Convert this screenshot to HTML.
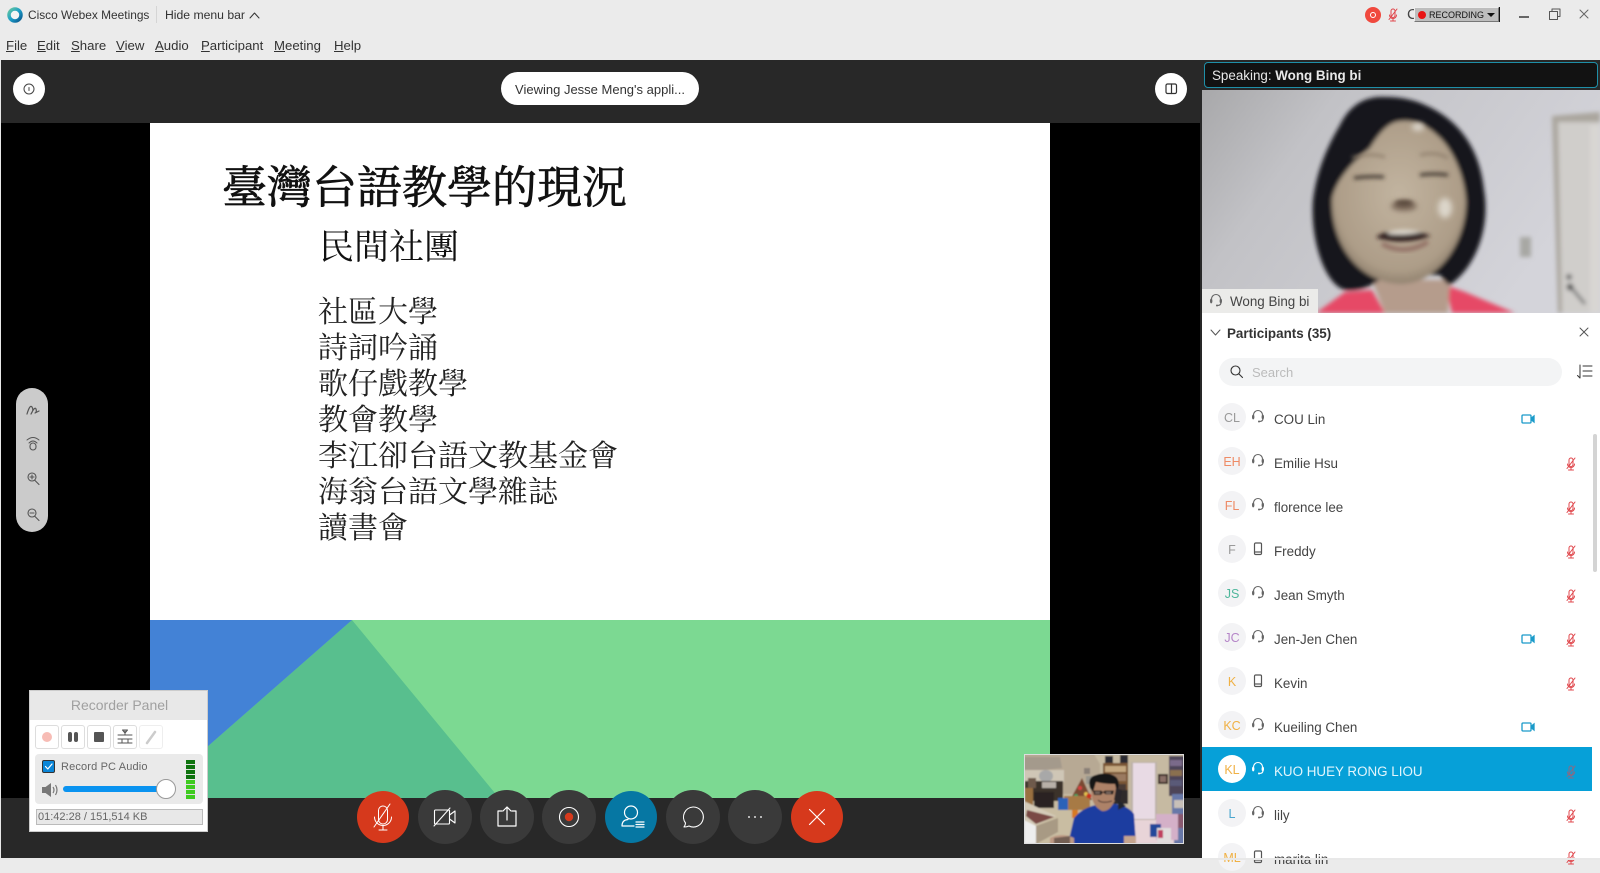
<!DOCTYPE html>
<html lang="zh-Hant"><head><meta charset="utf-8"><title>Cisco Webex Meetings</title>
<style>
*{box-sizing:border-box}
html,body{margin:0;padding:0;width:1600px;height:860px;overflow:hidden;background:#ebebeb;font-family:"Liberation Sans",sans-serif;color:#333}
.a{position:absolute;white-space:nowrap}
svg{position:absolute;overflow:visible}
.s{fill:none;stroke:currentColor;stroke-linecap:round;stroke-linejoin:round}
.cjk{font-family:"Liberation Serif","Noto Serif CJK TC","Noto Serif CJK SC",serif;color:#111}
.m{top:38px;font-size:13.2px;color:#333}
.c{position:absolute;top:790px;width:54px;height:54px;border-radius:50%;background:#3a3a3a;color:#fff}
.c svg{left:0;top:0}
.red{background:#d6391c;clip-path:circle(26px at 27px 27px)}
.av{position:absolute;left:1218px;width:28px;height:28px;border-radius:50%;background:#f3f3f5;font-size:12.500px;text-align:center;line-height:30px}
.n{position:absolute;left:1274px;font-size:13.400px;color:#444;white-space:nowrap;line-height:18px;margin-top:1px}
.rb{position:absolute;top:725px;width:24px;height:24px;background:#fff;border:1px solid #ddd;border-radius:3px}
</style></head><body>
<svg width="0" height="0" style="position:absolute"><defs>
<g id="hs" fill="none" stroke="#666" stroke-width="1.100" stroke-linecap="round"><path d="M-4.500 0V-1a4.500 4.500 0 0 1 9 0V0"/><ellipse cx="-4.800" cy="1" rx="1.200" ry="2.400" fill="#666" stroke="none"/><ellipse cx="4.800" cy="1" rx="1.200" ry="2.400" fill="#666" stroke="none"/><path d="M5 3Q4.500 5.500 1.500 5.500"/><circle cx="1" cy="5.500" r="1" fill="#666" stroke="none"/></g>
<g id="ph" fill="none" stroke="#555" stroke-width="1.200"><rect x="-3.500" y="-6" width="7" height="11.500" rx="1.200"/><path d="M-3.500 3H3.500"/></g>
<g id="mu" fill="none" stroke="#e0474c" stroke-width="1" stroke-linecap="round"><rect x="-2" y="-6" width="4" height="8.500" rx="2"/><path d="M-3.500 0a3.500 3.500 0 0 0 7 0M0 3.500V6M-2.500 6H2.500M-4 4.500L4 -6"/></g>
<g id="vi" fill="none" stroke="#1a9ac9" stroke-width="1.300"><rect x="-6" y="-4" width="9" height="8" rx="1"/><path d="M3.500 -1L6 -3V3L3.500 1Z" fill="#1a9ac9"/></g>
</defs></svg>

<!-- Title bar -->
<div class="a" style="left:0;top:0;width:1600px;height:60px;background:#ebebeb"></div>
<svg style="left:7px;top:7px" width="16" height="16" viewBox="0 0 16 16"><defs><linearGradient id="lg" x1="0" y1="0" x2="1" y2="1"><stop offset="0" stop-color="#63c5a0"/><stop offset=".5" stop-color="#1c9ec9"/><stop offset="1" stop-color="#0a5a90"/></linearGradient></defs><circle cx="8" cy="8" r="6" fill="#f4f4f4" stroke="url(#lg)" stroke-width="3.500"/></svg>
<div class="a" style="left:28px;top:8px;font-size:11.900px;line-height:15px;color:#333">Cisco Webex Meetings</div>
<div class="a" style="left:156px;top:6px;width:1px;height:17px;background:#d5d5d5"></div>
<div class="a" style="left:165px;top:8px;font-size:12.200px;line-height:15px;color:#333">Hide menu bar</div>
<svg style="left:249px;top:11px;color:#333" width="11" height="8"><path class="s" d="M1 7L5.500 2L10 7" stroke-width="1"/></svg>

<div class="a m" style="left:6px"><u>F</u>ile</div>
<div class="a m" style="left:37px"><u>E</u>dit</div>
<div class="a m" style="left:71px"><u>S</u>hare</div>
<div class="a m" style="left:116px"><u>V</u>iew</div>
<div class="a m" style="left:155px"><u>A</u>udio</div>
<div class="a m" style="left:201px"><u>P</u>articipant</div>
<div class="a m" style="left:274px"><u>M</u>eeting</div>
<div class="a m" style="left:334px"><u>H</u>elp</div>

<!-- top right -->
<div class="a" style="left:1365px;top:7px;width:16px;height:16px;border-radius:50%;background:#f0493e"></div>
<div class="a" style="left:1370px;top:12px;width:6px;height:6px;border-radius:50%;border:1.500px solid #fff"></div>
<svg style="left:1393px;top:15px" width="1" height="1"><use href="#mu"/></svg>
<div class="a" style="left:1407px;top:6px;font-size:15px;color:#444">C</div>
<div class="a" style="left:1414px;top:7px;width:85px;height:15px;background:#bdbdbd;border-top:1px solid #eee;border-left:1px solid #eee;border-bottom:1px solid #777;border-right:1px solid #777"></div>
<div class="a" style="left:1418px;top:11px;width:8px;height:8px;border-radius:50%;background:#e81313"></div>
<div class="a" style="left:1429px;top:8px;font-size:9px;line-height:14px;color:#111">RECORDING</div>
<div class="a" style="left:1487px;top:13px;width:0;height:0;border:4px solid transparent;border-top:4px solid #111"></div>
<div class="a" style="left:1499px;top:7px;width:1px;height:15px;background:#111"></div>
<div class="a" style="left:1519px;top:16px;width:10px;height:2px;background:#666"></div>
<svg style="left:1549px;top:8px;color:#555" width="12" height="12"><path class="s" d="M.5 3.500H8.500V11.500H.5ZM3 3.500V1H11V8.500H8.500" stroke-width="1" stroke-linecap="square"/></svg>
<svg style="left:1579px;top:9px;color:#666" width="10" height="10"><path class="s" d="M1 1L9 9M9 1L1 9" stroke-width="1"/></svg>

<!-- Main dark stage -->
<div class="a" style="left:1px;top:60px;width:1201px;height:798px;background:#282828"></div>
<div class="a" style="left:1px;top:123px;width:1199px;height:675px;background:#000"></div>

<!-- Slide -->
<div class="a" style="left:150px;top:123px;width:900px;height:675px;background:#fff"></div>
<svg style="left:0;top:0" width="1600" height="860" viewBox="0 0 1600 860">
<rect x="150" y="620" width="900" height="178" fill="#7cd992"/>
<path d="M150 798V797L352 620L499 798Z" fill="#58bf8e"/>
<path d="M150 620H352L150 797Z" fill="#4382d6"/>
</svg>
<div class="a cjk" style="left:222px;top:161px;font-size:45px;line-height:54px;font-weight:400;-webkit-text-stroke:.7px #111">臺灣台語教學的現況</div>
<div class="a cjk" style="left:319px;top:226px;font-size:35px;line-height:44px">民間社團</div>
<div class="a cjk" style="left:318px;top:295px;font-size:30px;line-height:36px;font-weight:400;white-space:pre;color:#222">社區大學
詩詞吟誦
歌仔戲教學
教會教學
李江卻台語文教基金會
海翁台語文學雜誌
讀書會</div>

<!-- Stage controls -->
<div class="a" style="left:13px;top:73px;width:32px;height:32px;border-radius:50%;background:#fff"></div>
<svg style="left:13px;top:73px;color:#444" width="32" height="32"><circle class="s" cx="16" cy="16" r="5" stroke-width="1"/><path class="s" d="M16 14.500V17.500" stroke-width="1"/></svg>
<div class="a" style="left:501px;top:72px;width:198px;height:33px;border-radius:17px;background:#fff;font-size:13px;line-height:35px;text-align:center;color:#333">Viewing Jesse Meng's appli...</div>
<div class="a" style="left:1155px;top:73px;width:32px;height:32px;border-radius:50%;background:#fff"></div>
<svg style="left:1155px;top:73px;color:#333" width="32" height="32"><rect class="s" x="11" y="11" width="10.500" height="9.500" rx="1.500" stroke-width="1.200"/><path class="s" d="M16.500 11V20.500" stroke-width="1.200"/></svg>

<!-- left tools -->
<div class="a" style="left:16px;top:388px;width:32px;height:144px;border-radius:16px;background:#cbcbcb"></div>
<svg style="left:17px;top:391px;color:#555" width="32" height="144" viewBox="0 0 32 144">
<path class="s" stroke-width="1.200" d="M10 23Q13 13 15 16T14 23Q18 15 19 18T18 22L22 20"/>
<path class="s" stroke-width="1" d="M10 49Q16 44 22 49M12 52Q16 48 20 52"/><rect class="s" stroke-width="1.100" x="13" y="52" width="6" height="7" rx="3"/>
<circle class="s" stroke-width="1.100" cx="15" cy="86" r="4"/><path class="s" stroke-width="1.100" d="M18 89.500L22 93.500M13 86H17M15 84V88"/>
<circle class="s" stroke-width="1.100" cx="15" cy="122" r="4"/><path class="s" stroke-width="1.100" d="M18 125.500L22 129.500M13 122H17"/>
</svg>

<!-- Toolbar -->
<div class="c red" style="left:356px"><svg class="s" width="54" height="54" viewBox="0 0 54 54" stroke-width="1"><rect x="22.500" y="16" width="9" height="18" rx="4.500"/><path d="M18.500 27a8.500 8.500 0 0 0 17 0M27 36V40M23 40H31M18 37L34 14"/></svg></div>
<div class="c" style="left:418px"><svg class="s" width="54" height="54" viewBox="0 0 54 54" stroke-width="1.100"><rect x="16.500" y="20" width="15" height="14" rx="1"/><path d="M31.500 25L37 21V33L31.500 29M16 36L32 18"/></svg></div>
<div class="c" style="left:480px"><svg class="s" width="54" height="54" viewBox="0 0 54 54" stroke-width="1.200"><path d="M22 21H18V36H36V21H32M27 30V17M23 21L27 17L31 21"/></svg></div>
<div class="c" style="left:542px"><svg width="54" height="54" viewBox="0 0 54 54"><circle cx="27" cy="27" r="9.500" fill="none" stroke="#fff" stroke-width="1.100"/><circle cx="27" cy="27" r="4.200" fill="#d6391c"/></svg></div>
<div class="c" style="left:604px;background:#0677a3;clip-path:circle(26px at 27px 27px)"><svg class="s" width="54" height="54" viewBox="0 0 54 54" stroke-width="1.200"><circle cx="27" cy="22.500" r="6.500"/><path d="M18 36Q18 30 24 29.500M18 36H30M32 32H40M32 34.500H40M32 37H40"/></svg></div>
<div class="c" style="left:666px"><svg class="s" width="54" height="54" viewBox="0 0 54 54" stroke-width="1.100"><path d="M27 17A10 10 0 1 1 23 36Q21 37 18 37Q19.500 35 19.500 33A10 10 0 0 1 27 17Z"/></svg></div>
<div class="c" style="left:728px"><svg width="54" height="54"><circle cx="21" cy="27" r="1" fill="#ddd"/><circle cx="27" cy="27" r="1" fill="#ddd"/><circle cx="33" cy="27" r="1" fill="#ddd"/></svg></div>
<div class="c red" style="left:790px"><svg class="s" width="54" height="54" viewBox="0 0 54 54" stroke-width="1.200"><path d="M19.500 19.500L34.500 34.500M34.500 19.500L19.500 34.500"/></svg></div>

<!-- Recorder panel -->
<div class="a" style="left:29px;top:690px;width:179px;height:142px;background:#fff;border:1px solid #ccc"></div>
<div class="a" style="left:30px;top:691px;width:177px;height:29px;background:#e8e8e8;color:#a0a0a0;font-size:14px;line-height:29px;text-align:center;padding-left:2px">Recorder Panel</div>
<div class="rb" style="left:35px"></div><div class="rb" style="left:61px"></div><div class="rb" style="left:87px"></div><div class="rb" style="left:113px"></div><div class="rb" style="left:139px;border-color:#eee"></div>
<div class="a" style="left:42px;top:732px;width:10px;height:10px;border-radius:50%;background:#f7bcb5"></div>
<div class="a" style="left:68px;top:732px;width:4px;height:10px;border-radius:2px;background:#555"></div>
<div class="a" style="left:74px;top:732px;width:4px;height:10px;border-radius:2px;background:#555"></div>
<div class="a" style="left:94px;top:732px;width:10px;height:10px;border-radius:1px;background:#555"></div>
<svg style="left:113px;top:725px;color:#555" width="24" height="24"><path class="s" stroke-width="1" d="M5 10H19M5 14H19M5 18H19M9 14V18M15 14V18M12 5V10M9.500 5H14.500L12 8Z"/></svg>
<svg style="left:139px;top:725px;color:#ccc" width="24" height="24"><path class="s" stroke-width="2.500" d="M8 18L16 7"/></svg>
<div class="a" style="left:35px;top:754px;width:168px;height:50px;background:#eaeaea;border-radius:4px"></div>
<div class="a" style="left:42px;top:760px;width:13px;height:13px;background:#0a86d8;border:1px solid #333;border-radius:2px"></div>
<svg style="left:42px;top:760px;color:#fff" width="13" height="13"><path class="s" stroke-width="1.200" d="M3.500 6.500L5.800 9L10 4"/></svg>
<div class="a" style="left:61px;top:760px;font-size:11px;line-height:14px;color:#666;letter-spacing:.15px">Record PC Audio</div>
<svg style="left:42px;top:782px" width="17" height="16"><path d="M0 5H3.500L9 1V15L3.500 11H0Z" fill="#777"/><path d="M11 5Q13 8 11 11M13.500 3Q16.500 8 13.500 13" fill="none" stroke="#777" stroke-width="1.200"/></svg>
<div class="a" style="left:63px;top:786px;width:106px;height:6px;border-radius:3px;background:#0a93f0"></div>
<div class="a" style="left:156px;top:779px;width:20px;height:20px;border-radius:50%;background:#fff;border:1px solid #999"></div>
<div class="a" style="left:186px;top:760px;width:9px;height:39px;background:repeating-linear-gradient(to bottom,#0e730e 0 4px,#e0e0e0 4px 5px) 0 0/9px 19px no-repeat,repeating-linear-gradient(to bottom,#3ecb1f 0 4px,#e0e0e0 4px 5px) 0 20px/9px 19px no-repeat"></div>
<div class="a" style="left:36px;top:809px;width:167px;height:16px;background:#e8e8e8;border:1px solid #bbb;font-size:11px;line-height:14px;padding-left:1px;color:#666">01:42:28 / 151,514 KB</div>

<!-- Self view -->
<svg style="left:1024px;top:754px" width="160" height="90" viewBox="0 0 160 90">
<defs><clipPath id="cp"><rect width="160" height="90"/></clipPath><filter id="b1"><feGaussianBlur stdDeviation=".8"/></filter></defs>
<g clip-path="url(#cp)"><g filter="url(#b1)">
<rect width="160" height="90" fill="#c6baa2"/>
<path d="M0 0H70L76 10V40H0Z" fill="#b7a994"/>
<path d="M0 3H36L38 14L0 18Z" fill="#a49a8c"/>
<path d="M0 16H40V28H0Z" fill="#cfc6b6"/>
<ellipse cx="22" cy="22" rx="7" ry="6" fill="#a8a8a8"/>
<path d="M60 14H66V20H60Z" fill="#8a8078"/>
<rect x="1" y="27" width="38" height="20" fill="#3a302c"/>
<rect x="4" y="24" width="8" height="10" fill="#6e5a4c"/><rect x="18" y="28" width="14" height="6" fill="#b8b0a8"/>
<rect x="1" y="34" width="8" height="22" fill="#9a7040"/>
<rect x="10" y="38" width="20" height="16" fill="#2a2420"/>
<path d="M58 24L68 46H46Z" fill="#7a4a30"/>
<circle cx="56" cy="34" r="2" fill="#d84040"/><circle cx="62" cy="40" r="2" fill="#e0c050"/><circle cx="52" cy="42" r="2" fill="#40a060"/>
<rect x="62" y="22" width="10" height="8" fill="#98968e"/>
<rect x="40" y="42" width="26" height="14" fill="#a77a45"/>
<rect x="34" y="44" width="10" height="14" fill="#2a62b8"/>
<rect x="42" y="56" width="12" height="8" fill="#d87a20"/>
<rect x="79" y="9" width="25" height="34" fill="#7a5636"/>
<rect x="81" y="12" width="21" height="6" fill="#c4a880"/><rect x="81" y="20" width="21" height="7" fill="#9a7a60"/><rect x="81" y="30" width="21" height="6" fill="#4a3a34"/><rect x="86" y="36" width="18" height="14" fill="#2e2a2c"/>
<rect x="81" y="2" width="8" height="7" fill="#2a2a30"/><rect x="96" y="1" width="8" height="8" fill="#2a2a30"/>
<rect x="107" y="8" width="26" height="58" fill="#bdb2a8"/>
<rect x="109" y="9" width="22" height="56" fill="#e8dae4"/>
<rect x="134" y="20" width="10" height="10" fill="#3e302a"/><rect x="136" y="22" width="6" height="6" fill="#8a7068"/>
<rect x="145" y="2" width="15" height="40" fill="#4e4458"/>
<rect x="146" y="6" width="12" height="6" fill="#7a6a8a"/><rect x="146" y="16" width="12" height="6" fill="#8a7050"/><rect x="146" y="26" width="12" height="6" fill="#5a5a78"/>
<rect x="148" y="40" width="12" height="50" fill="#6878a8"/><rect x="150" y="46" width="10" height="8" fill="#c8c0b8"/><rect x="150" y="60" width="10" height="14" fill="#8a5a70"/>
<rect x="105" y="66" width="45" height="24" fill="#e8d4d8"/>
<rect x="132" y="60" width="22" height="26" fill="#d4b0c8"/><rect x="126" y="70" width="11" height="13" fill="#24479a"/><rect x="133" y="74" width="14" height="15" fill="#e0dcdc"/><rect x="134" y="76" width="5" height="8" fill="#c04060"/>
<rect x="0" y="56" width="48" height="34" fill="#c9bda2"/>
<path d="M0 47L32 62L10 72L0 66Z" fill="#d4cbb8"/><path d="M3 56L30 63L12 70L2 62Z" fill="#7a4a44"/>
<path d="M0 66L12 72V90H0Z" fill="#eee"/><path d="M12 72L34 64V78L12 90Z" fill="#a89a84"/>
<path d="M44 90L50 64Q58 54 72 51L92 50Q104 52 110 60L112 90Z" fill="#1e3ea0"/>
<path d="M94 46L102 52L94 56Z" fill="#22282e"/>
<path d="M26 84Q38 78 50 84V90H26Z" fill="#bd9a84"/><path d="M30 84L46 82V90H30Z" fill="#2a2220" opacity=".5"/>
<path d="M100 82H112V90H100Z" fill="#c5a48e"/>
<path d="M67 34Q67 24 78 23Q92 24 93 34L91 46Q86 58 78 57Q70 53 68 44Z" fill="#ad8268"/>
<path d="M66 34Q63 23 72 21Q84 17 92 23Q97 28 93 38L91 30Q80 30 72 28L69 38Z" fill="#181418"/>
<path d="M69 36.500H77L79 38L81 36.500H90L89 40.500L82 40.500L79 38.500L77 41H70Z" fill="#221c1e"/>
<rect x="71" y="37.500" width="5" height="2.500" fill="#75645c"/><rect x="82" y="37.500" width="5" height="2.500" fill="#75645c"/>
<path d="M92 34L98 36L96 48L90 46Z" fill="#2a262a"/>
<path d="M88 47Q78 50 74 46" stroke="#4a3430" stroke-width="1" fill="none"/>
<circle cx="65" cy="42" r="2.500" fill="#c8301e"/>
</g></g>
<rect x=".5" y=".5" width="159" height="89" fill="none" stroke="#ddd"/></svg>

<!-- Right column -->
<div class="a" style="left:1200px;top:60px;width:400px;height:800px;background:#282828"></div>
<div class="a" style="left:1204px;top:62px;width:394px;height:26px;background:#121212;border:1px solid #1f8fa8;border-radius:4px;color:#e8e8e8;font-size:13.400px;line-height:25px;padding-left:7px">Speaking: <b>Wong Bing bi</b></div>

<svg style="left:1202px;top:90px" width="398" height="223" viewBox="1202 90 398 223">
<defs><clipPath id="cv"><rect x="1202" y="90" width="398" height="223"/></clipPath>
<linearGradient id="wall" x1="0" y1="0" x2="1" y2="0.400"><stop offset="0" stop-color="#a8a8aa"/><stop offset=".3" stop-color="#c2c2c6"/><stop offset="1" stop-color="#d4d4da"/></linearGradient>
<radialGradient id="skin" cx=".5" cy=".45" r=".62"><stop offset="0" stop-color="#c2b4a0"/><stop offset=".75" stop-color="#ad9d88"/><stop offset="1" stop-color="#7c6d5c"/></radialGradient>
<filter id="b2" x="-20%" y="-20%" width="140%" height="140%"><feGaussianBlur stdDeviation="2"/></filter><filter id="b3" x="-30%" y="-60%" width="160%" height="220%"><feGaussianBlur stdDeviation="3"/></filter></defs>
<g clip-path="url(#cv)">
<rect x="1202" y="90" width="398" height="223" fill="url(#wall)"/>
<g filter="url(#b2)">
<path d="M1552 116L1600 112V313H1558Z" fill="#aaa69e"/>
<path d="M1558 122H1600V313H1562Z" fill="#d0cecb"/>
<path d="M1590 125H1600V313H1590Z" fill="#d8d6d3"/>
<rect x="1520" y="237" width="11" height="20" fill="#a8a8a4"/>
<path d="M1569 285L1585 304" stroke="#777" stroke-width="3"/><circle cx="1569" cy="277" r="3" fill="#666"/><circle cx="1570" cy="287" r="3.500" fill="#555"/>
<path d="M1316 313L1345 292L1372 290L1385 313Z" fill="#e64a66"/><path d="M1445 285L1465 292L1515 313H1452Z" fill="#e64a66"/>
<path d="M1372 280H1450L1448 313H1385Z" fill="#b59c8c"/>
<path d="M1385 97C1365 96 1350 105 1340 125C1325 150 1316 175 1313 200C1310 240 1325 285 1345 290C1360 292 1375 285 1385 275L1440 275C1445 282 1448 285 1450 285C1478 265 1490 225 1484 190C1480 150 1460 120 1425 105C1410 98 1395 97 1385 97Z" fill="#15141a"/>
<path d="M1402 121C1388 121 1378 135 1370 148C1358 158 1338 175 1332 198C1330 240 1355 282 1400 284C1440 284 1467 240 1466 200C1464 172 1450 146 1438 136C1426 124 1412 120 1402 121Z" fill="url(#skin)"/>
</g>
<g filter="url(#b3)"><ellipse cx="1445" cy="208" rx="7" ry="10" fill="#dcd6ca"/><ellipse cx="1418" cy="127" rx="6" ry="4" fill="#dbd6cc"/>
<ellipse cx="1404" cy="206" rx="13" ry="5" fill="#7a6858"/>
</g>
<g filter="url(#b2)">
<path d="M1352 158Q1368 152 1385 157M1420 155Q1436 151 1448 158" stroke="#8e7e6c" stroke-width="2.500" fill="none"/>
<path d="M1354 178Q1368 176 1384 177M1420 175Q1434 173 1448 175" stroke="#3a302a" stroke-width="3" fill="none"/>
<ellipse cx="1404" cy="203" rx="9" ry="3" fill="#5a4a3c"/>
</g>
<g filter="url(#b2)"><path d="M1377 236Q1400 224 1431 236Q1405 246 1377 238Z" fill="#2e1e1c"/><path d="M1388 232Q1402 227 1422 232Q1405 236 1388 234Z" fill="#dcd6cc"/><path d="M1382 244Q1405 256 1428 242" stroke="#8e6a60" stroke-width="4" fill="none"/></g>
</g></svg>
<div class="a" style="left:1202px;top:289px;width:116px;height:24px;background:#ebebe9;font-size:13.400px;line-height:25px;color:#444;padding-left:28px">Wong Bing bi</div>
<svg style="left:1216px;top:300px" width="1" height="1"><use href="#hs"/></svg>

<!-- Participants -->
<div class="a" style="left:1202px;top:313px;width:398px;height:545px;background:#fff"></div>
<svg style="left:1210px;top:329px;color:#555" width="11" height="8"><path class="s" d="M1 1L5.500 6L10 1" stroke-width="1"/></svg>
<div class="a" style="left:1227px;top:325px;font-size:13.400px;font-weight:700;color:#333;line-height:18px">Participants (35)</div>
<svg style="left:1579px;top:327px;color:#555" width="10" height="10"><path class="s" d="M1 1L9 9M9 1L1 9" stroke-width="1"/></svg>
<div class="a" style="left:1219px;top:358px;width:343px;height:28px;border-radius:14px;background:#f3f4f5;color:#bbb;font-size:13px;line-height:30px;padding-left:33px">Search</div>
<svg style="left:1230px;top:365px;color:#333" width="14" height="14"><circle class="s" cx="5.500" cy="5.500" r="4.500" stroke-width="1.100"/><path class="s" d="M9 9L12.500 12.500" stroke-width="1.100"/></svg>
<svg style="left:1576px;top:364px;color:#333" width="17" height="16"><path class="s" d="M4 1V14L1.500 11.500M7 2H16M7 7H16M7 12H16" stroke-width="1"/></svg>
<div class="a" style="left:1593px;top:434px;width:4px;height:138px;background:#d4d4d4;border-radius:2px"></div>

<div class="a" style="left:1202px;top:747px;width:390px;height:44px;background:#06a0d8"></div>

<div class="av" style="top:403px;color:#999">CL</div><div class="n" style="top:410px">COU Lin</div>
<div class="av" style="top:447px;color:#ee8b66">EH</div><div class="n" style="top:454px">Emilie Hsu</div>
<div class="av" style="top:491px;color:#ee8b66">FL</div><div class="n" style="top:498px">florence lee</div>
<div class="av" style="top:535px;color:#999">F</div><div class="n" style="top:542px">Freddy</div>
<div class="av" style="top:579px;color:#4fb79c">JS</div><div class="n" style="top:586px">Jean Smyth</div>
<div class="av" style="top:623px;color:#b585c8">JC</div><div class="n" style="top:630px">Jen-Jen Chen</div>
<div class="av" style="top:667px;color:#f0b145">K</div><div class="n" style="top:674px">Kevin</div>
<div class="av" style="top:711px;color:#f0b145">KC</div><div class="n" style="top:718px">Kueiling Chen</div>
<div class="av" style="top:755px;color:#f0b145;background:#fff">KL</div><div class="n" style="top:762px;color:#e2f5fc">KUO HUEY RONG LIOU</div>
<div class="av" style="top:799px;color:#4aa6cf">L</div><div class="n" style="top:806px">lily</div>
<div class="av" style="top:843px;color:#f0b145">ML</div><div class="n" style="top:850px">marita lin</div>

<svg style="left:0;top:0" width="1600" height="860" viewBox="0 0 1600 860">
<use href="#hs" x="1258" y="416"/><use href="#hs" x="1258" y="460"/><use href="#hs" x="1258" y="504"/>
<use href="#ph" x="1258" y="549"/><use href="#hs" x="1258" y="592"/><use href="#hs" x="1258" y="636"/>
<use href="#ph" x="1258" y="681"/><use href="#hs" x="1258" y="724"/>
<use href="#hs" x="1258" y="768" style="filter:brightness(4)"/>
<use href="#hs" x="1258" y="812"/><use href="#ph" x="1258" y="857"/>
<use href="#vi" x="1528" y="419"/><use href="#vi" x="1528" y="639"/><use href="#vi" x="1528" y="727"/>
<use href="#mu" x="1571" y="464"/><use href="#mu" x="1571" y="508"/><use href="#mu" x="1571" y="552"/><use href="#mu" x="1571" y="596"/><use href="#mu" x="1571" y="640"/><use href="#mu" x="1571" y="684"/><use href="#mu" x="1571" y="772" opacity=".6"/><use href="#mu" x="1571" y="816"/><use href="#mu" x="1571" y="858"/>
</svg>
<div class="a" style="left:0;top:858px;width:1600px;height:2px;background:#e8e8e8"></div>
<div class="a" style="left:0;top:60px;width:1px;height:798px;background:#e8e8e8"></div>
</body></html>
